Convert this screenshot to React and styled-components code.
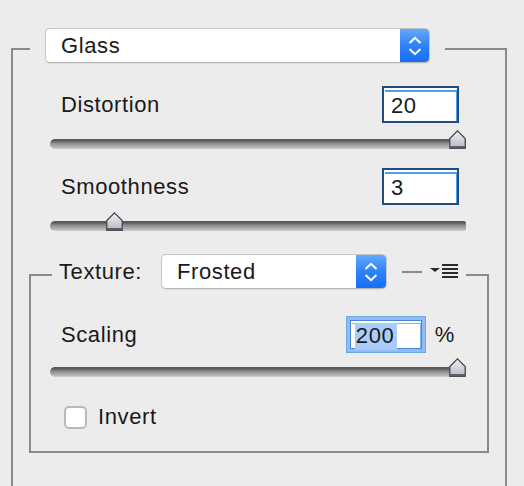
import React from "react";
import styled, { createGlobalStyle } from "styled-components";

const GlobalStyle = createGlobalStyle`
  html, body {
    margin: 0;
    background: #ececec;
    overflow: hidden;
  }
  body {
    font-family: "Liberation Sans", Arial, sans-serif;
    color: #1a1a1a;
  }
`;

const Page = styled.div`
  height: 486px;
  padding: 28px 17px 0 11px;
  box-sizing: border-box;
`;

const Group = styled.fieldset`
  margin: 0;
  padding: 0 ${(p) => (p.$inner ? 0 : 16)}px ${(p) => (p.$inner ? 21 : 80)}px;
  border: 2px solid #8a8a8a;
  min-inline-size: 0;
  margin-top: ${(p) => p.$top || 0}px;
`;

const Legend = styled.legend`
  display: flex;
  align-items: center;
  margin-left: ${(p) => p.$offset}px;
  padding: 0 ${(p) => p.$padR}px 7px ${(p) => p.$padL}px;
`;

const Select = styled.div`
  display: flex;
  align-items: stretch;
  width: ${(p) => p.$width}px;
  height: 35px;
  box-sizing: border-box;
  background: #fff;
  border: 1px solid #c6c6c6;
  border-bottom-color: #b4b4b4;
  border-radius: 5px;
  box-shadow: 0 1px 1px rgba(0, 0, 0, 0.06);
  overflow: hidden;
  font-size: 22px;
  letter-spacing: 0.6px;
`;

const SelectText = styled.span`
  flex: 1;
  display: flex;
  align-items: center;
  padding-left: 15px;
`;

const SelectButton = styled.span`
  width: ${(p) => p.$width}px;
  display: flex;
  align-items: center;
  justify-content: center;
  background: linear-gradient(#62a8fb, #2b80f7 55%, #186ef5);
`;

const Row = styled.div`
  display: flex;
  align-items: center;
  height: 37px;
  margin-top: ${(p) => p.$top}px;
  padding: 0 ${(p) => p.$right}px 0 ${(p) => p.$left}px;
  font-size: 22px;
  letter-spacing: 0.6px;
`;

const Label = styled.span`
  flex: 1;
`;

const NumberBox = styled.div`
  width: 77px;
  height: 37px;
  box-sizing: border-box;
  border: 2px solid #214c7c;
  background: #fff;
  box-shadow: inset 1px 2px 0 #fff, inset -1px 4px 0 #4a9ff0;
  padding: 4px 0 0 7px;
  line-height: 28px;
`;

const FocusBox = styled.div`
  width: 72px;
  height: 29px;
  margin: 0 4px;
  box-sizing: border-box;
  border: 1px solid #4788d6;
  background: #fff;
  box-shadow: 0 0 0 3px #8fbdf2, 0 0 0 4px #6ea6e8, inset 1px 2px 0 #fff, inset -1px 3px 0 #7fb3ef;
  padding: 3px 0 0 4px;
  line-height: 24px;
`;

const Selected = styled.span`
  background: #a9cdf8;
  padding: 0 3px 2px 1px;
`;

const Unit = styled.span`
  margin-left: 9px;
`;

const SliderWrap = styled.div`
  position: relative;
  height: 20px;
  margin: ${(p) => p.$top}px ${(p) => p.$right}px 0 ${(p) => p.$left}px;
`;

const Track = styled.div`
  position: absolute;
  left: 0;
  right: 0;
  bottom: 1px;
  height: 10px;
  border-radius: 5px 2px 2px 5px;
  background: linear-gradient(#555 0, #5f5f5f 20%, #8c8c8c 42%, #a6a6a6 68%, #cdcdcd 100%);
`;

const Thumb = styled.svg`
  position: absolute;
  top: 0;
  width: 17px;
  height: 20px;
`;

const CheckRow = styled.label`
  display: flex;
  align-items: center;
  gap: 11px;
  margin: 26px 0 0 33px;
  font-size: 22px;
  letter-spacing: 0.6px;
`;

const CheckBox = styled.span`
  width: 23px;
  height: 23px;
  box-sizing: border-box;
  border: 2px solid #b9b9b9;
  border-radius: 5px;
  background: #fff;
`;

const LegendLabel = styled.span`
  width: 102px;
  font-size: 22px;
  letter-spacing: 0.6px;
`;

const Dash = styled.span`
  width: 20px;
  height: 2px;
  margin: 0 8px 0 15px;
  background: #8a8a8a;
`;

function Chevrons() {
  return (
    <svg width="14" height="20" viewBox="0 0 14 20">
      <path d="M1.5 7 L7 1.8 L12.5 7" fill="none" stroke="#fff" strokeWidth="2" />
      <path d="M1.5 13 L7 18.2 L12.5 13" fill="none" stroke="#fff" strokeWidth="2" />
    </svg>
  );
}

function Popup({ value, width, buttonWidth }) {
  return (
    <Select $width={width}>
      <SelectText>{value}</SelectText>
      <SelectButton $width={buttonWidth}>
        <Chevrons />
      </SelectButton>
    </Select>
  );
}

function Slider({ pos, top, left, right }) {
  return (
    <SliderWrap $top={top} $left={left} $right={right}>
      <Track />
      <Thumb viewBox="0 0 17 20" style={{ left: `calc(${pos}% - ${(pos / 100) * 17}px)` }}>
        <defs>
          <linearGradient id="thumbFill" x1="0" y1="0" x2="0" y2="1">
            <stop offset="0" stopColor="#eef0f3" />
            <stop offset="1" stopColor="#b4bac4" />
          </linearGradient>
        </defs>
        <path d="M8.5 0.8 L16.2 8.5 V18.5 H0.8 V8.5 Z" fill="url(#thumbFill)" stroke="#3f4246" strokeWidth="1.2" />
        <rect x="1" y="16" width="15" height="2.5" fill="#5a5e66" />
      </Thumb>
    </SliderWrap>
  );
}

function MenuIcon() {
  return (
    <svg width="28" height="16" viewBox="0 0 28 16">
      <path d="M0 4 H10 L5 8 Z" fill="#2a2a2a" />
      <rect x="12" y="0" width="16" height="2" fill="#2a2a2a" />
      <rect x="12" y="4" width="16" height="2" fill="#2a2a2a" />
      <rect x="12" y="8" width="16" height="2" fill="#2a2a2a" />
      <rect x="12" y="12" width="16" height="2" fill="#2a2a2a" />
    </svg>
  );
}

export default function App() {
  return (
    <Page>
      <GlobalStyle />
      <Group>
        <Legend $offset={1} $padL={15} $padR={15}>
          <Popup value="Glass" width={385} buttonWidth={29} />
        </Legend>

        <Row $top={16} $left={32} $right={30}>
          <Label>Distortion</Label>
          <NumberBox>20</NumberBox>
        </Row>
        <Slider pos={100} top={7} left={21} right={23} />

        <Row $top={18} $left={32} $right={30}>
          <Label>Smoothness</Label>
          <NumberBox>3</NumberBox>
        </Row>
        <Slider pos={14} top={7} left={21} right={23} />

        <Group $inner $top={22}>
          <Legend $offset={21} $padL={7} $padR={8}>
            <LegendLabel>Texture:</LegendLabel>
            <Popup value="Frosted" width={226} buttonWidth={30} />
            <Dash />
            <MenuIcon />
          </Legend>

          <Row $top={20} $left={30} $right={32}>
            <Label>Scaling</Label>
            <FocusBox>
              <Selected>200</Selected>
            </FocusBox>
            <Unit>%</Unit>
          </Row>
          <Slider pos={100} top={5} left={19} right={21} />

          <CheckRow>
            <CheckBox />
            Invert
          </CheckRow>
        </Group>
      </Group>
    </Page>
  );
}
